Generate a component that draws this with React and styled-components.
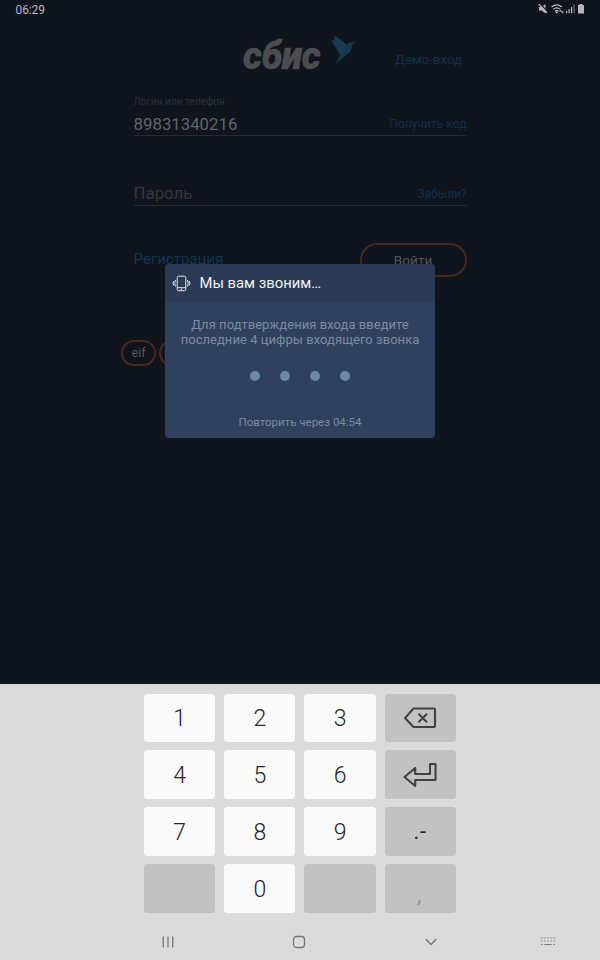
import React from 'react';
import styled, { createGlobalStyle } from 'styled-components';

const GlobalStyle = createGlobalStyle`
  * { box-sizing: border-box; }
  body { margin: 0; background: #0f141d; font-family: Roboto, "Noto Sans", sans-serif; }
`;

const Screen = styled.div`
  position: relative;
  width: 600px;
  height: 960px;
  display: flex;
  flex-direction: column;
  overflow: hidden;
  background: #0f141d;
`;

const StatusBar = styled.header`
  height: 20px;
  flex: none;
  display: flex;
  align-items: center;
  justify-content: space-between;
  padding: 0 14px 2px 15.5px;
  color: #b3b6ba;
`;

const Label = styled.span`
  font-size: ${(p) => p.$size}px;
  line-height: ${(p) => p.$line || 20}px;
  letter-spacing: ${(p) => p.$spacing || 0}px;
  color: ${(p) => p.$color || 'inherit'};
  white-space: nowrap;
`;

const Clock = styled(Label)`
  padding-top: 1px;
`;

const LoginPage = styled.main`
  flex: 1;
  width: 333px;
  margin-left: 133.6px;
  display: flex;
  flex-direction: column;
`;

const BrandRow = styled.div`
  height: 60px;
  flex: none;
  display: flex;
  align-items: flex-start;
  padding: 14px 4.5px 0 109px;
`;

const Wordmark = styled.span`
  width: 88px;
  height: 44px;
  font: italic 900 39px/44px Roboto, sans-serif;
  letter-spacing: -0.5px;
  color: #4c4d4f;
  -webkit-text-stroke: 0.4px #4c4d4f;
  transform: scaleX(0.965);
  transform-origin: left center;
`;

const DemoLink = styled.a`
  margin: 16px 0 0 auto;
  font-size: 13.3px;
  line-height: 20px;
  color: #10304a;
`;

const Field = styled.div`
  height: ${(p) => p.$height}px;
  flex: none;
  display: flex;
  flex-direction: column;
  justify-content: flex-end;
  border-bottom: 1px solid #262a32;
`;

const FieldLine = styled.div`
  display: flex;
  align-items: center;
  justify-content: space-between;
  height: 24px;
  padding-top: ${(p) => p.$drop || 0}px;
`;

const Caption = styled(Label)`
  margin-bottom: 3px;
`;

const FieldAction = styled(Label)`
  padding-top: ${(p) => p.$drop || 0}px;
`;

const Actions = styled.div`
  display: flex;
  justify-content: space-between;
  margin-top: 37px;
  height: 34px;
`;

const EnterButton = styled.button`
  width: 107px;
  height: 34px;
  padding: 0;
  border: 2px solid #45291f;
  border-radius: 17px;
  background: transparent;
  color: #515357;
  font: 13.6px/30px Roboto, sans-serif;
`;

const Accounts = styled.div`
  display: flex;
  gap: 3px;
  margin: 63px 0 0 -12.5px;
`;

const AccountChip = styled.button`
  width: 35px;
  height: 26px;
  padding: 0;
  border: 2px solid #4a281c;
  border-radius: 13px;
  background: transparent;
  color: #56585c;
  font: 12px/22px Roboto, sans-serif;
`;

const Dialog = styled.section`
  position: absolute;
  left: 165px;
  top: 264px;
  width: 270px;
  height: 174px;
  border-radius: 4px;
  overflow: hidden;
  background: #30415d;
  display: flex;
  flex-direction: column;
  align-items: center;
`;

const DialogTitle = styled.div`
  width: 100%;
  height: 38px;
  flex: none;
  display: flex;
  align-items: center;
  gap: 8.5px;
  padding-left: 7px;
  background: #2c3b54;
  color: #f1f3f5;
`;

const Message = styled.p`
  margin: 15px 0 0;
  font-size: 13px;
  line-height: 15px;
  text-align: center;
  white-space: nowrap;
  letter-spacing: 0.04px;
  color: #7b8a9f;
`;

const CodeDots = styled.div`
  display: flex;
  gap: 20px;
  margin: 24px 0 31px;
`;

const Dot = styled.i`
  width: 10px;
  height: 10px;
  border-radius: 50%;
  background: #688ba3;
`;

const Keyboard = styled.footer`
  height: 276px;
  flex: none;
  background: #dbdbdb;
  display: flex;
  flex-direction: column;
`;

const Keys = styled.div`
  display: grid;
  grid-template-columns: repeat(4, 71.3px);
  grid-auto-rows: 48.8px;
  gap: 8px 8.9px;
  padding: 9.5px 0 0 144px;
`;

const Key = styled.button`
  display: flex;
  align-items: center;
  justify-content: center;
  padding: ${(p) => (p.$muted ? 0 : 3)}px 0 0;
  border: 0;
  border-radius: 3.5px;
  background: ${(p) => (p.$muted ? '#c2c2c2' : '#fafafa')};
  color: ${(p) => (p.$faint ? '#999' : '#252525')};
  font: 300 23px/28px Roboto, sans-serif;
`;

const Punctuation = styled.span`
  font-weight: 400;
  font-size: 22px;
  letter-spacing: 0.8px;
  padding-top: 2px;
`;

const Comma = styled.span`
  font-size: 20px;
  font-style: italic;
  font-weight: 500;
  padding-top: 13px;
`;

const Navigation = styled.nav`
  flex: 1;
  display: grid;
  grid-template-columns: 131.5px 131.5px 131.5px 102px;
  justify-items: center;
  align-items: center;
  padding: 11px 0 0 102px;
`;

const keys = ['1', '2', '3', 'delete', '4', '5', '6', 'enter', '7', '8', '9', '.-', '', '0', '', ','];

const StatusIcons = () => (
  <svg width="48" height="12" viewBox="0 0 48 12" fill="currentColor">
    <path d="M1 4h2.500l4-3v9.500L3.500 7.500H1z" />
    <path d="M2 .5l8 9" stroke="#0f141d" strokeWidth="1.200" />
    <path d="M1 1.200l8 8.600" stroke="currentColor" strokeWidth="1.300" />
    <g fill="none" stroke="currentColor" strokeWidth="1.300">
      <path d="M13.500 4q5.200-4.200 10.500 0M15.200 6.200q3.500-2.800 7 0M17 8.200q1.800-1.400 3.600 0" />
    </g>
    <circle cx="18.800" cy="9.500" r="1.100" />
    <path d="M22.500 6.500l1.500 2H21zM24.500 10.500L23 8.500h3z" />
    <path d="M28 8h1.200v2H28zM30.500 6h1.200v4h-1.200zM33 4h1.200v6H33z" />
    <path d="M35.500 1.500h1.200V10h-1.200z" opacity=".6" />
    <path d="M41.500 1h3v1H46v8.500h-6V2h1.500z" />
  </svg>
);

const Bird = () => (
  <svg width="26" height="32" viewBox="0 0 26 32">
    <path d="M3.200 1 14 9 15.500 14 8 17 2.500 10 0 5.500l3.800 1.700z" fill="#193a52" />
    <path d="M2.500 10 12 14 9 20.500Z" fill="#17344c" />
    <path d="M14 12.500q2.500-4.500 6.500-4l4.500-1-3.500 3.500q-.5 6-6 10L4.500 30l5-10.500z" fill="#18364b" />
    <path d="M6 12l9-1.500 1 5-7 5z" fill="#193b53" />
  </svg>
);

const PhoneIcon = () => (
  <svg width="19" height="17" viewBox="0 0 19 17" fill="none" stroke="#dfe4ea" strokeWidth="1">
    <rect x="5.200" y="1.200" width="8.600" height="14.500" rx="1.300" />
    <path d="M5.200 12.700h8.600M8.700 14.200h1.600M3.500 5q-1.500 3.200 0 6.500M1.700 6q-1.200 2.200 0 4.500M15.500 5q1.500 3.200 0 6.500M17.300 6q1.200 2.200 0 4.500" />
  </svg>
);

const DeleteIcon = () => (
  <svg width="34" height="22" viewBox="0 0 34 22" fill="none" stroke="#434343" strokeWidth="2.100" strokeLinejoin="round">
    <path d="M10.500 1.500H31a1 1 0 0 1 1 1v16.500a1 1 0 0 1-1 1H10.500L2 11z" />
    <path d="M15.500 6.700l8.500 8.500m0-8.500l-8.500 8.500" />
  </svg>
);

const EnterIcon = () => (
  <svg width="35" height="26" viewBox="0 0 35 26" fill="none" stroke="#434343" strokeWidth="2.100" strokeLinejoin="round">
    <path d="M27 2h5.500v16H12.200v6L1.500 15 12.200 6v6H27z" />
  </svg>
);

const KeyContent = ({ value }) => {
  if (value === 'delete') return <DeleteIcon />;
  if (value === 'enter') return <EnterIcon />;
  if (value === '.-') return <Punctuation>.-</Punctuation>;
  if (value === ',') return <Comma>,</Comma>;
  return value;
};

export default function App() {
  return (
    <Screen>
      <GlobalStyle />
      <StatusBar>
        <Clock $size={12} $spacing={-0.1}>06:29</Clock>
        <StatusIcons />
      </StatusBar>
      <LoginPage>
        <BrandRow>
          <Wordmark>сбис</Wordmark>
          <Bird />
          <DemoLink>Демо-вход</DemoLink>
        </BrandRow>
        <Field $height={56}>
          <Caption $size={10.1} $line={12} $color="#2b3037">Логин или телефон</Caption>
          <FieldLine $drop={2}>
            <Label $size={16.8} $color="#626469">89831340216</Label>
            <Label $size={12.1} $color="#10304a">Получить код</Label>
          </FieldLine>
        </Field>
        <Field $height={70}>
          <FieldLine>
            <Label $size={16.8} $color="#34373d">Пароль</Label>
            <FieldAction $drop={2} $size={12} $color="#10304a">Забыли?</FieldAction>
          </FieldLine>
        </Field>
        <Actions>
          <Label $size={15} $line={33} $color="#12354f">Регистрация</Label>
          <EnterButton>Войти</EnterButton>
        </Actions>
        <Accounts>
          <AccountChip>eif</AccountChip>
          <AccountChip />
        </Accounts>
      </LoginPage>
      <Keyboard>
        <Keys>
          {keys.map((value, index) => (
            <Key
              key={index}
              $muted={index % 4 === 3 || value === ''}
              $faint={value === ','}
            >
              <KeyContent value={value} />
            </Key>
          ))}
        </Keys>
        <Navigation>
          <svg width="12" height="12" viewBox="0 0 12 12" stroke="#777" strokeWidth="1.300">
            <path d="M1.200 .5v11M6 .5v11M10.700 .5v11" />
          </svg>
          <svg width="14" height="14" viewBox="0 0 14 14" fill="none" stroke="#777" strokeWidth="1.300">
            <rect x="1.500" y="1.500" width="11" height="11" rx="3" />
          </svg>
          <svg width="12" height="8" viewBox="0 0 12 8" fill="none" stroke="#777" strokeWidth="1.400">
            <path d="M.7 1 6 6.400 11.300 1" />
          </svg>
          <svg width="14" height="9" viewBox="0 0 14 9" stroke="#777" strokeWidth="1.200">
            <path d="M0 1h14M0 4h14" strokeDasharray="1.300 1.850" />
            <path d="M0 7.500h1.300M3.200 7.500h7.400M12.600 7.500h1.300" />
          </svg>
        </Navigation>
      </Keyboard>
      <Dialog>
        <DialogTitle>
          <PhoneIcon />
          <Label $size={14.8}>Мы вам звоним…</Label>
        </DialogTitle>
        <Message>
          Для подтверждения входа введите
          <br />
          последние 4 цифры входящего звонка
        </Message>
        <CodeDots>
          <Dot />
          <Dot />
          <Dot />
          <Dot />
        </CodeDots>
        <Label $size={11.5} $color="#7b8a9f">Повторить через 04:54</Label>
      </Dialog>
    </Screen>
  );
}
